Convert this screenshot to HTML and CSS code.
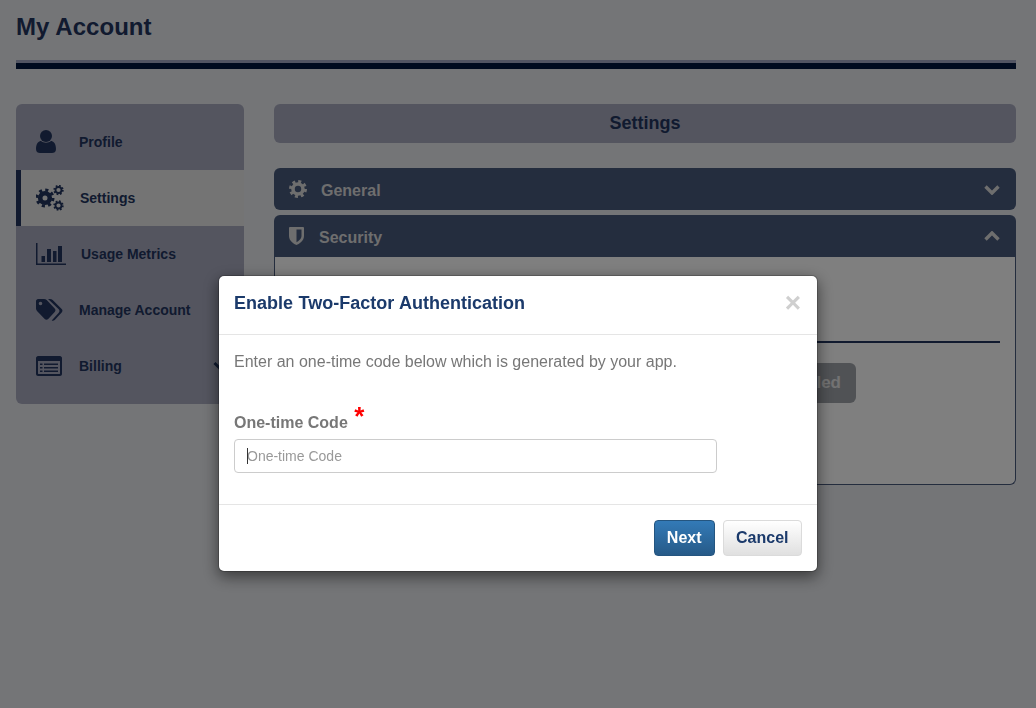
FILE: index.html
```html
<!DOCTYPE html>
<html lang="en">
  <head>
    <meta charset="UTF-8" />
    <meta name="viewport" content="width=device-width, initial-scale=1.0" />
    <title>My Account</title>
    <link rel="stylesheet" href="styles.css">
  </head>

  <body>
    <header class="page-head">
      <h1>My Account</h1>
    </header>

    <div class="layout">
      <nav class="sidebar">
        <a class="side-item">
          <svg class="side-icon" width="20" height="24" viewBox="0 0 20 24"><circle cx="10" cy="6" r="6"/><path d="M0 19c0-6 3-8 5-8 1.500 1 3 1.700 5 1.700s3.500-.7 5-1.700c2 0 5 2 5 8 0 3-2 4-4 4H4c-2 0-4-1-4-4z"/></svg>
          <span class="side-label">Profile</span>
        </a>
        <a class="side-item active">
          <svg class="side-icon" width="28" height="26" viewBox="0 0 28 26">
            <circle class="teeth" cx="9" cy="13" r="8" stroke-width="3" stroke-dasharray="3.100 3.180"/>
            <circle class="ring" cx="9" cy="13" r="4.800" stroke-width="4.600"/>
            <circle class="teeth" cx="22.500" cy="5" r="4.300" stroke-width="1.800" stroke-dasharray="1.700 1.677"/>
            <circle class="ring" cx="22.500" cy="5" r="3" stroke-width="1.800"/>
            <circle class="teeth" cx="22.500" cy="20.500" r="4.300" stroke-width="1.800" stroke-dasharray="1.700 1.677"/>
            <circle class="ring" cx="22.500" cy="20.500" r="3" stroke-width="1.800"/>
          </svg>
          <span class="side-label">Settings</span>
        </a>
        <a class="side-item">
          <svg class="side-icon" width="30" height="23" viewBox="0 0 30 23"><path d="M0 0h1.500v20.500H30V22H0z"/><path d="M5.500 13H9v6H5.500zM11 6h4v13h-4zM17 8h3.500v11H17zM22 3h4v16h-4z"/></svg>
          <span class="side-label">Usage Metrics</span>
        </a>
        <a class="side-item">
          <svg class="side-icon" width="27" height="23" viewBox="0 0 27 23"><path fill-rule="evenodd" d="M2 0h6c1 0 2 .4 2.700 1.100l8 8.500c1 1 1 2.400 0 3.400l-6.500 7c-1 1-2.500 1-3.500 0L1 12C.4 11.300 0 10.500 0 9.500V2C0 1 1 0 2 0zm2.500 2.700a1.800 1.800 0 1 0 0 3.600 1.800 1.800 0 0 0 0-3.600z"/><path d="M12 0h2c1 0 2 .4 2.700 1.100l9 9c1 1 1 2.400 0 3.400l-7 7.500c-1 1-2 1-3 .4l7-7.700c1-1.200 1-2.300 0-3.400z"/></svg>
          <span class="side-label">Manage Account</span>
        </a>
        <a class="side-item">
          <svg class="side-icon" width="26" height="20" viewBox="0 0 26 20"><path fill-rule="evenodd" d="M2 0h22c1 0 2 1 2 2v16c0 1-1 2-2 2H2c-1 0-2-1-2-2V2C0 1 1 0 2 0zm0 5v12.500c0 .3.200.5.500.5h21c.3 0 .5-.2.500-.5V5z"/><path d="M4 7.500h2.500v1.500H4zM8 7.500h14v1.500H8zM4 11h2.500v1.500H4zM8 11h14v1.500H8zM4 14.500h2.500V16H4zM8 14.500h14V16H8z"/></svg>
          <span class="side-label">Billing</span>
          <svg class="side-chevron" width="14" height="10" viewBox="0 0 14 10"><path d="M1.500 2 7 7.500 12.500 2" /></svg>
        </a>
      </nav>

      <main class="content">
        <h2 class="content-title">Settings</h2>

        <section class="panel">
          <div class="panel-head">
            <svg class="panel-icon" width="18" height="18" viewBox="0 0 18 18">
              <circle class="teeth" cx="9" cy="9" r="7.300" stroke-width="3.400" stroke-dasharray="2.900 2.830"/>
              <circle class="ring" cx="9" cy="9" r="5" stroke-width="3.600"/>
            </svg>
            <span class="panel-name">General</span>
            <svg class="panel-chevron" width="16" height="11" viewBox="0 0 16 11"><path d="M1.500 2.500 8 9l6.500-6.500"/></svg>
          </div>
        </section>

        <section class="panel">
          <div class="panel-head">
            <svg class="panel-icon shield" width="15" height="18" viewBox="0 0 15 18"><path fill-rule="evenodd" d="M1 0h13c.5 0 1 .5 1 1v8c0 5-5 8-7.500 9C5 17 0 14 0 9V1c0-.5.500-1 1-1zm6.500 2.500v12.700c2-1 5-3.200 5-6.200V2.500z"/></svg>
            <span class="panel-name">Security</span>
            <svg class="panel-chevron" width="16" height="11" viewBox="0 0 16 11"><path d="M1.500 8.500 8 2l6.500 6.500"/></svg>
          </div>
          <div class="panel-body">
            <div class="tfa-rule"></div>
            <div class="tfa-row">
              <button class="tfa-btn" type="button">Disabled</button>
            </div>
          </div>
        </section>
      </main>
    </div>

    <div class="backdrop"></div>

    <div class="modal-wrap">
      <div class="modal">
        <div class="modal-head">
          <h4>Enable Two-Factor Authentication</h4>
          <span class="modal-close">&times;</span>
        </div>
        <div class="modal-body">
          <p>Enter an one-time code below which is generated by your app.</p>
          <label for="kode">One-time Code <span class="req">*</span></label>
          <div class="input-wrap">
            <input id="kode" type="text" placeholder="One-time Code" />
            <span class="caret"></span>
          </div>
        </div>
        <div class="modal-foot">
          <button class="btn btn-next" type="button">Next</button>
          <button class="btn btn-cancel" type="button">Cancel</button>
        </div>
      </div>
    </div>
  </body>
</html>
```

FILE: styles.css
```css
* {
  box-sizing: border-box;
}

body {
  margin: 0;
  padding: 0 20px 0 16px;
  height: 708px;
  overflow: hidden;
  background-color: #e9ebef;
  font-family: "Liberation Sans", Arial, sans-serif;
  color: #22355f;
}

.page-head {
  height: 69px;
  padding-top: 13px;
  border-bottom: 6px solid #00163f;
}

.page-head::after {
  content: "";
  display: block;
  height: 3px;
  margin-top: 19px;
  background-color: #a4abc6;
}

h1 {
  margin: 0;
  height: 28px;
  font-size: 24px;
  line-height: 28px;
  font-weight: bold;
  letter-spacing: 0.05px;
}

.layout {
  display: flex;
  gap: 30px;
  margin-top: 35px;
  align-items: flex-start;
}

/* sidebar */
.sidebar {
  width: 228px;
  flex: none;
  padding: 10px 0;
  border-radius: 6px;
  background-color: #a9abbf;
}

.side-item {
  display: flex;
  align-items: center;
  height: 56px;
  padding-left: 20px;
  color: #22355f;
}

.side-item.active {
  background-color: #e8e8e8;
  border-left: 5px solid #22355f;
  padding-left: 15px;
}

.side-icon {
  fill: #22355f;
  flex: none;
}

.side-label {
  font-size: 14px;
  font-weight: bold;
}

.side-item:nth-child(1) .side-label {
  margin-left: 23px;
}

.side-item:nth-child(2) .side-label {
  margin-left: 16px;
}

.side-item:nth-child(3) .side-label {
  margin-left: 15px;
}

.side-item:nth-child(4) .side-label {
  margin-left: 16px;
}

.side-item:nth-child(5) .side-label {
  margin-left: 17px;
}

.side-chevron {
  margin-left: auto;
  margin-right: 17px;
  fill: none;
  stroke: #22355f;
  stroke-width: 3;
}

.teeth,
.ring {
  fill: none;
  stroke: #22355f;
}

/* right column */
.content {
  flex: 1;
}

.content-title {
  margin: 0 0 25px;
  height: 39px;
  line-height: 39px;
  border-radius: 6px;
  background-color: #a9abbf;
  text-align: center;
  font-size: 18px;
  font-weight: bold;
}

.panel {
  margin-bottom: 5px;
}

.panel-head {
  display: flex;
  align-items: center;
  height: 42px;
  padding: 0 15px;
  border-radius: 6px;
  background-color: #495a7c;
  color: #dcdcdc;
}

.panel:last-child .panel-head {
  border-radius: 6px 6px 0 0;
}

.panel-icon {
  flex: none;
  fill: #dcdcdc;
}

.panel-icon .teeth,
.panel-icon .ring {
  stroke: #dcdcdc;
}

.panel-name {
  margin-left: 14px;
  padding-top: 3px;
  font-size: 16px;
  font-weight: bold;
}

.shield + .panel-name {
  margin-left: 15px;
}

.panel-chevron {
  margin-left: auto;
  margin-right: 1px;
  fill: none;
  stroke: #dcdcdc;
  stroke-width: 3.400;
}

.panel-body {
  height: 228px;
  padding: 0 15px;
  border: 1px solid #495a7c;
  border-top: 0;
  border-radius: 0 0 6px 6px;
  background-color: #fff;
}

.tfa-rule {
  height: 86px;
  border-bottom: 2px solid #22355f;
}

.tfa-row {
  display: flex;
  justify-content: flex-end;
  padding: 20px 144px 0 0;
}

.tfa-btn {
  height: 40px;
  width: 120px;
  padding: 0 15px;
  border: 0;
  border-radius: 6px;
  background-color: #a0a4aa;
  color: #e6e6e6;
  text-align: right;
  font-family: "Liberation Sans", Arial, sans-serif;
  font-size: 17px;
  font-weight: bold;
}

/* modal */
.backdrop {
  position: fixed;
  inset: 0;
  background-color: rgba(0, 0, 0, 0.5);
}

.modal-wrap {
  position: fixed;
  inset: 0;
  display: flex;
  justify-content: center;
  align-items: flex-start;
  padding-top: 275px;
}

.modal {
  width: 600px;
  border: 1px solid rgba(0, 0, 0, 0.2);
  border-radius: 6px;
  background-color: #fff;
  background-clip: padding-box;
  box-shadow: 0 5px 15px rgba(0, 0, 0, 0.5);
}

.modal-head {
  display: flex;
  justify-content: space-between;
  align-items: center;
  height: 59px;
  padding: 0 15px 4px;
  border-bottom: 1px solid #e5e5e5;
}

.modal-head h4 {
  margin: 0;
  font-size: 18px;
  font-weight: bold;
  word-spacing: 0.5px;
  color: #1b3a6b;
}

.modal-close {
  margin-right: 1px;
  font-size: 28px;
  font-weight: bold;
  line-height: 1;
  color: #cfcfcf;
}

.modal-body {
  padding: 15px 15px 16px;
  color: #777;
}

.modal-body p {
  margin: 0 0 38px;
  font-size: 16px;
  line-height: 23px;
}

.modal-body label {
  display: block;
  height: 23px;
  margin-bottom: 5px;
  font-size: 16px;
  line-height: 23px;
  font-weight: bold;
}

.req {
  margin-left: 2px;
  color: #f00;
  font-size: 26px;
  line-height: 0;
  vertical-align: 3px;
}

.input-wrap {
  position: relative;
  width: 483px;
  margin-bottom: 15px;
}

input {
  display: block;
  width: 100%;
  height: 34px;
  padding: 0 12px;
  border: 1px solid #ccc;
  border-radius: 4px;
  font-family: "Liberation Sans", Arial, sans-serif;
  font-size: 14px;
}

input::placeholder {
  color: #999;
}

.caret {
  position: absolute;
  left: 13px;
  top: 9px;
  width: 1px;
  height: 16px;
  background-color: #333;
}

.modal-foot {
  display: flex;
  justify-content: flex-end;
  gap: 8px;
  padding: 15px;
  border-top: 1px solid #e5e5e5;
}

.btn {
  height: 36px;
  padding: 0 12px;
  border: 1px solid;
  border-radius: 4px;
  font-family: "Liberation Sans", Arial, sans-serif;
  font-size: 16px;
  font-weight: bold;
}

.btn-next {
  border-color: #245580;
  background-image: linear-gradient(#337ab7, #265a88);
  color: #fff;
}

.btn-cancel {
  padding: 0 12.5px;
  border-color: #dbdbdb;
  background-image: linear-gradient(#fff, #e0e0e0);
  color: #1b3a6b;
}
```
